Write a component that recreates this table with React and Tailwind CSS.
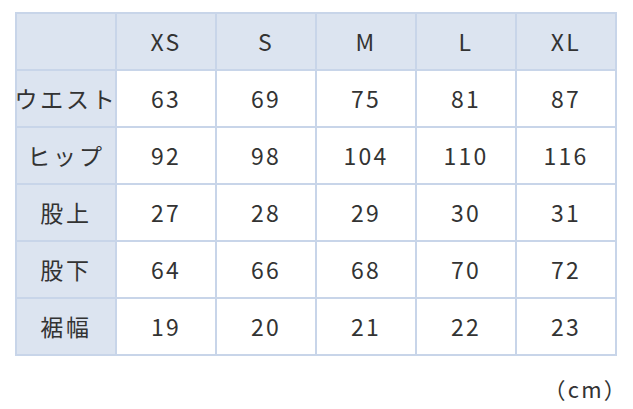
const sizes = ['XS', 'S', 'M', 'L', 'XL'];

const rows = [
  { label: 'ウエスト', values: [63, 69, 75, 81, 87] },
  { label: 'ヒップ', values: [92, 98, 104, 110, 116] },
  { label: '股上', values: [27, 28, 29, 30, 31] },
  { label: '股下', values: [64, 66, 68, 70, 72] },
  { label: '裾幅', values: [19, 20, 21, 22, 23] },
];

const font = { fontFamily: '"Noto Sans CJK JP", "Noto Sans", sans-serif' };

export default function App() {
  return (
    <div className="w-[633px] h-[409px] bg-white text-[#333]" style={font}>
      <div className="pt-[12px] pl-[15px]">
        <div className="grid grid-cols-[repeat(6,98px)] gap-[2px] p-[2px] bg-[#c8d5e9] w-fit">
          <div className="h-[55px] bg-[#dce4f0]" />
          {sizes.map((s) => (
            <div key={s} className="h-[55px] bg-[#dce4f0] flex items-center justify-center text-[23px] tracking-[0.1em]">
              {s}
            </div>
          ))}
          {rows.map((r) => (
            <>
              <div key={r.label} className="h-[55px] bg-[#dce4f0] flex items-center justify-center text-[23px] tracking-[0.12em] whitespace-nowrap">
                {r.label}
              </div>
              {r.values.map((v, i) => (
                <div key={r.label + i} className="h-[55px] bg-white flex items-center justify-center text-[23px] tracking-[0.1em]">
                  {v}
                </div>
              ))}
            </>
          ))}
        </div>
      </div>
      <div className="w-[628px] text-right mt-[16px] text-[22px] tracking-[0.1em]">（cm）</div>
    </div>
  );
}
